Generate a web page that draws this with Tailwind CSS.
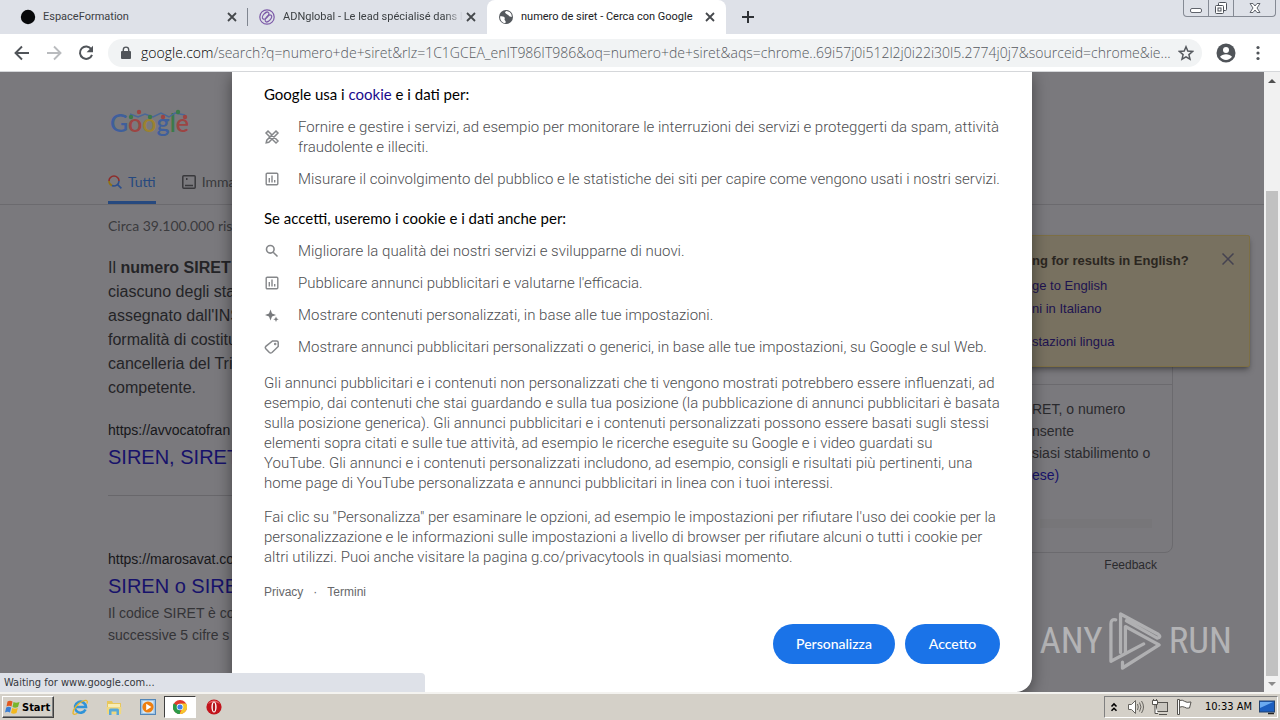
<!DOCTYPE html>
<html lang="it">
<head>
<meta charset="utf-8">
<title>numero de siret - Cerca con Google</title>
<script src="https://cdn.jsdelivr.net/npm/@tailwindcss/browser@4"></script>
</head>
<body class="h-screen flex flex-col overflow-hidden bg-[#7a797d] font-['Liberation_Sans',Arial,sans-serif] text-sm">

<!-- Tab strip -->
<header class="h-[34px] shrink-0 flex bg-[#dee1e8] font-['Roboto',sans-serif] text-[11px] text-[#3c4043]">
  <div class="w-[247px] flex items-center pl-5 pr-[3px]">
    <svg class="size-4 shrink-0" viewBox="0 0 16 16"><circle cx="8" cy="8" r="7.2" fill="#08090b"/></svg>
    <span class="ml-[7px] flex-1 whitespace-nowrap">EspaceFormation</span>
    <button aria-label="Chiudi scheda" class="size-6 grid place-items-center"><svg class="size-2.5" viewBox="0 0 10 10" stroke="#45484c" stroke-width="1.8"><path d="M1 1l8 8M9 1l-8 8"/></svg></button>
  </div>
  <div class="w-[240px] flex items-center border-l border-[#808690] h-[18px] mt-2 pl-[11px] pr-2">
    <svg class="size-4 shrink-0" viewBox="0 0 16 16" fill="none" stroke="#7c5aa8" stroke-width="1.2"><circle cx="8" cy="8" r="7.2"/><ellipse cx="6.6" cy="6.6" rx="2.2" ry="4.2" transform="rotate(40 6.6 6.6)"/><ellipse cx="9.4" cy="9.4" rx="2.2" ry="4.2" transform="rotate(40 9.4 9.4)"/></svg>
    <span class="ml-2 flex-1 w-0 overflow-hidden whitespace-nowrap mask-r-from-90%">ADNglobal - Le lead spécialisé dans la</span>
    <button aria-label="Chiudi scheda" class="w-4 h-6 grid place-items-center"><svg class="size-2.5" viewBox="0 0 10 10" stroke="#45484c" stroke-width="1.8"><path d="M1 1l8 8M9 1l-8 8"/></svg></button>
  </div>
  <div class="w-[239px] flex items-center pl-[11px] pr-1 bg-white rounded-t-lg">
    <svg class="size-4 shrink-0" viewBox="0 0 16 16"><circle cx="8" cy="8" r="7" fill="#55595e"/><path d="M2.2 7.2c2 .2 3.600 0 4.400 1.400.6 1.200-.6 1.600.2 2.600.8.900 1.200 1.200.6 2.900-3.200-.2-5.700-3.200-5.200-6.900zM8.200 2c-1 .8-1.600 1.600-.6 2.200 1 .5 1 1.300 2.200 1.500 1 .2.600 1.500 2 1.700.9.100 1.400.3 2 .6C14 4.800 11.600 2.200 8.200 2z" fill="#fff"/></svg>
    <span class="ml-[7px] flex-1 whitespace-nowrap text-[#202124]">numero de siret - Cerca con Google</span>
    <button aria-label="Chiudi scheda" class="size-6 grid place-items-center"><svg class="size-2.5" viewBox="0 0 10 10" stroke="#45484c" stroke-width="1.8"><path d="M1 1l8 8M9 1l-8 8"/></svg></button>
  </div>
  <button aria-label="Nuova scheda" class="ml-[10px] w-6 grid place-items-center"><svg class="size-3" viewBox="0 0 12 12" stroke="#2f3236" stroke-width="2"><path d="M6 0v12M0 6h12"/></svg></button>
  <div class="ml-auto mr-1 h-[17px] flex border border-t-0 border-[#858a94] rounded-b-[4px] overflow-hidden">
    <button aria-label="Riduci a icona" class="w-6 grid place-items-center"><svg class="w-3 h-4" viewBox="0 0 12 16" fill="#fff" stroke="#60646c"><rect x=".5" y="8.500" width="11" height="4" rx="1.500"/></svg></button>
    <button aria-label="Ripristina" class="w-[26px] border-x border-[#858a94] grid place-items-center"><svg class="w-3.5 h-4" viewBox="0 0 14 16" fill="#fff" stroke="#4d5159"><rect x="4.500" y="2.500" width="8" height="8" rx="1"/><rect x="1.500" y="5.500" width="8" height="8" rx="1"/><rect x="4" y="8" width="3" height="3"/></svg></button>
    <button aria-label="Chiudi" class="w-[41px] grid place-items-center"><svg class="w-3 h-4" viewBox="0 0 12 16" fill="#fff" stroke="#60646c"><path d="M1 3.500h3l2 2.500 2-2.500h3L8 8l3 4.500H8L6 10l-2 2.500H1L4 8z"/></svg></button>
  </div>
</header>

<!-- Toolbar -->
<nav class="h-[38px] shrink-0 flex items-center bg-white border-b border-[#d5d7da]">
  <div class="flex items-center pl-[14px] gap-4">
    <button aria-label="Indietro"><svg class="size-4" viewBox="0 0 16 16" fill="none" stroke="#505459" stroke-width="1.900"><path d="M15 8H2M8 1.500L1.500 8 8 14.500"/></svg></button>
    <button aria-label="Avanti"><svg class="size-4" viewBox="0 0 16 16" fill="none" stroke="#b9bbbe" stroke-width="1.900"><path d="M1 8h13M8 1.500L14.500 8 8 14.500"/></svg></button>
    <button aria-label="Ricarica"><svg class="size-4" viewBox="0 0 16 16"><path d="M13.300 4.200A6.200 6.200 0 1 0 14 9.800" fill="none" stroke="#505459" stroke-width="2"/><path d="M15 .8v6.400H8.600z" fill="#505459"/></svg></button>
  </div>
  <div class="ml-[14px] flex-1 h-7 flex items-center rounded-full bg-[#f1f3f4] pl-[13px] pr-2">
    <svg class="w-2.5 h-3.5 shrink-0" viewBox="0 0 10 14"><rect x="0" y="5" width="10" height="8" rx="1" fill="#505459"/><path d="M2.300 5.500V3.800a2.700 2.700 0 0 1 5.400 0v1.700" fill="none" stroke="#505459" stroke-width="1.400"/></svg>
    <div class="ml-[10px] flex-1 flex items-center font-['Open_Sans',sans-serif] font-light text-sm leading-5">
      <label for="url" class="text-black">google.com</label>
      <input id="url" type="text" class="flex-1 min-w-0 bg-transparent text-[#55595e]" value="/search?q=numero+de+siret&amp;rlz=1C1GCEA_enIT986IT986&amp;oq=numero+de+siret&amp;aqs=chrome..69i57j0i512l2j0i22i30l5.2774j0j7&amp;sourceid=chrome&amp;ie...">
    </div>
    <button aria-label="Aggiungi ai preferiti"><svg class="size-4" viewBox="0 0 16 16" fill="none" stroke="#55595e" stroke-width="1.500"><path d="M8 1.800l1.800 4.300 4.700.4-3.600 3.100 1.100 4.600L8 11.800l-4 2.400 1.100-4.600L1.500 6.500l4.700-.4z"/></svg></button>
  </div>
  <button aria-label="Profilo" class="ml-[14px]"><svg class="size-5" viewBox="0 0 20 20"><circle cx="10" cy="10" r="9.500" fill="#505459"/><circle cx="10" cy="7" r="3" fill="#fff"/><path d="M4 13.800c1.200-1.800 3.500-2.600 6-2.600s4.800.8 6 2.600a7.300 7.300 0 0 1-12 0z" fill="#fff"/></svg></button>
  <button aria-label="Menu" class="ml-[14px] mr-[14px]"><svg class="w-4 h-4" viewBox="0 0 16 16" fill="#505459"><circle cx="8" cy="2.500" r="1.600"/><circle cx="8" cy="8" r="1.600"/><circle cx="8" cy="13.500" r="1.600"/></svg></button>
</nav>

<div class="flex-1 min-h-0 flex relative">
  <!-- Dimmed results page -->
  <div class="flex-1 relative overflow-hidden whitespace-nowrap">
    <div class="h-[133px] border-b border-[#6b6a6e] pl-[108px] flex flex-col justify-between">
      <div class="mt-8 ml-[2px] relative w-20 h-9 font-['Lato',sans-serif] font-semibold text-[25px] leading-9">
        <span class="text-[#3f5f9c]">G</span><span class="text-[#9c4543]">o</span><span class="text-[#9c8230]">o</span><span class="text-[#3f5f9c]">g</span><span class="text-[#3c7a4a]">l</span><span class="text-[#9c4543]">e</span>
        <svg class="absolute left-0 top-1 w-20 h-3" viewBox="0 0 80 12" fill="none" stroke-width="1.500"><path d="M20 6l8 3 7-3 8 3 8-4 8 4 6-4 10 2" stroke="#4a6797"/><g stroke="none"><circle cx="29" cy="4" r="2.200" fill="#9c4543"/><circle cx="40" cy="9" r="2.200" fill="#3c7a4a"/><circle cx="53" cy="9" r="2.200" fill="#9c4543"/><circle cx="68" cy="4" r="2.200" fill="#3c7a4a"/><circle cx="75" cy="9" r="2.200" fill="#9c4543"/><circle cx="21" cy="9" r="2.200" fill="#3c7a4a"/></g></svg>
      </div>
      <div class="flex gap-[26px] font-['Lato',sans-serif] text-sm leading-5">
        <a href="#" class="flex items-center gap-[6px] pb-[9px] border-b-[3px] border-[#26497f] text-[#26497f]"><svg class="size-[14px]" viewBox="0 0 14 14" fill="none" stroke-width="1.600"><path d="M1 6a5 5 0 0 1 5-5" stroke="#8e2d2b"/><path d="M6 1a5 5 0 0 1 5 5" stroke="#8e2d2b"/><path d="M1 6a5 5 0 0 0 3 4.600" stroke="#917312"/><path d="M4 10.600A5 5 0 0 0 11 6M9.600 9.600L13.400 13.400" stroke="#2d4f8c"/></svg>Tutti</a>
        <a href="#" class="flex items-center gap-[6px] pb-[9px] border-b-[3px] border-transparent text-[#39393c]"><svg class="size-[14px]" viewBox="0 0 14 14" fill="none" stroke="#39393c" stroke-width="1.500"><rect x=".8" y=".8" width="12.400" height="12.400" rx="1"/><path d="M3 10.500h8"/><path d="M4 4h1.500" stroke-width="2"/></svg>Imma</a>
      </div>
    </div>
    <main class="pl-[108px] w-[240px] text-[#242427]">
      <p class="mt-[11px] font-['Lato',sans-serif] text-sm leading-5 text-[#3b3b3e]">Circa 39.100.000 ris</p>
      <p class="mt-5 text-base leading-6">Il <b>numero SIRET</b><br>ciascuno degli sta<br>assegnato dall'INS<br>formalità di costitu<br>cancelleria del Trib<br>competente.</p>
      <p class="mt-5 text-sm leading-5 text-[#17171a]">https://avvocatofran</p>
      <h3 class="mt-[5px] text-xl leading-6"><a href="#" class="text-[#17126b]">SIREN, SIRET</a></h3>
      <hr class="mt-[26px] border-[#68676b]">
      <p class="mt-[53px] text-sm leading-5 text-[#17171a]">https://marosavat.co</p>
      <h3 class="mt-[5px] text-xl leading-6"><a href="#" class="text-[#17126b]">SIREN o SIRE</a></h3>
      <p class="mt-1 text-sm leading-[22px] text-[#343437]">Il codice SIRET è co<br>successive 5 cifre s</p>
    </main>
    <aside class="absolute top-[289px] right-[91px] w-[150px] text-[#2a2a2d]">
      <div class="h-[192px] border border-[#6b6a6e] rounded-b-lg">
        <div class="h-[23px] border-b border-[#6b6a6e]"></div>
        <p class="pt-[13px] pl-2 text-sm leading-[22px]">RET, o numero<br>nsente<br>siasi stabilimento o<br><a href="#" class="text-[#17126b]">ese)</a></p>
        <div class="mt-[33px] ml-4 mr-5 h-[9px] bg-[#777679]"></div>
      </div>
      <p class="pr-4 pt-[2px] text-right text-xs leading-5">Feedback</p>
    </aside>
    <!-- Language notice -->
    <section class="absolute top-[163px] right-[14px] w-[240px] h-[132px] bg-[#787160] border border-[#7d6f45] rounded-[2px] shadow-md shadow-black/30 pl-[21px] pt-[15px] text-[13px] text-[#1d1350]">
      <h2 class="leading-5 font-bold text-[#2b2620]">ng for results in English?</h2>
      <a href="#" class="mt-[5px] block leading-5">ge to English</a>
      <a href="#" class="mt-[3px] block leading-5">ni in Italiano</a>
      <a href="#" class="mt-[13px] block leading-5">stazioni lingua</a>
      <button aria-label="Chiudi" class="absolute top-[17px] right-[15px]"><svg class="size-3" viewBox="0 0 12 12" stroke="#454250" stroke-width="1.500"><path d="M.5.5l11 11M11.500.5l-11 11"/></svg></button>
    </section>

    <!-- Watermark -->
    <div class="absolute right-8 bottom-5 flex items-center gap-[6px] text-[#b3b3b5] font-['Liberation_Sans_Narrow','Roboto_Condensed','Roboto',sans-serif] text-[37px] leading-[62px]">
      <span>ANY</span>
      <svg class="w-[54px] h-[62px]" viewBox="0 0 56 62" fill="none" stroke="#b0b0b2" stroke-width="3.400" stroke-linejoin="round" stroke-linecap="round"><path d="M7 9Q2 8 2 13V52L36 34"/><path d="M17 43V16L52 35 14 59V53"/><path d="M12 43V3L51 24Q55 27 50 28L18 10"/></svg>
      <span>RUN</span>
    </div>

    <!-- Consent dialog -->
    <div role="dialog" aria-label="Consenso cookie" class="absolute inset-x-0 top-0 mx-auto w-[800px] max-w-full bg-white rounded-b-2xl shadow-[0_4px_16px_rgba(0,0,0,0.45)] px-8 pt-3 pb-7 font-['Roboto',sans-serif] font-light text-[15px] text-[#4d4e51] leading-5">
      <h2 class="font-['Lato',sans-serif] font-normal text-black">Google usa i <a href="#" class="text-[#1a0a8c]">cookie</a> e i dati per:</h2>
      <ul class="mt-[13px] flex flex-col gap-3">
        <li class="flex items-center gap-[18px]"><svg class="size-4 shrink-0" viewBox="0 0 16 16" fill="none" stroke="#85878a" stroke-width="1.500"><path d="M2 4L4 2l10 10-2 2zM12 2l2 2L4.800 13.200 2.200 13.800l.6-2.600z"/></svg><span>Fornire e gestire i servizi, ad esempio per monitorare le interruzioni dei servizi e proteggerti da spam, attività<br>fraudolente e illeciti.</span></li>
        <li class="flex items-center gap-[18px]"><svg class="size-4 shrink-0" viewBox="0 0 16 16" fill="none" stroke="#85878a" stroke-width="1.400"><rect x="2.200" y="2.200" width="11.600" height="11.600" rx="1"/><path d="M5.300 7v4.500M8 4.500v7M10.700 9v2.500"/></svg><span>Misurare il coinvolgimento del pubblico e le statistiche dei siti per capire come vengono usati i nostri servizi.</span></li>
      </ul>
      <h2 class="mt-[19px] font-['Lato',sans-serif] font-normal text-black">Se accetti, useremo i cookie e i dati anche per:</h2>
      <ul class="mt-[13px] flex flex-col gap-3">
        <li class="flex items-center gap-[18px]"><svg class="size-4 shrink-0" viewBox="0 0 16 16" fill="none" stroke="#85878a" stroke-width="1.600"><circle cx="6.300" cy="6.300" r="3.800"/><path d="M9.200 9.200L13.500 13.500"/></svg><span>Migliorare la qualità dei nostri servizi e svilupparne di nuovi.</span></li>
        <li class="flex items-center gap-[18px]"><svg class="size-4 shrink-0" viewBox="0 0 16 16" fill="none" stroke="#85878a" stroke-width="1.400"><rect x="2.200" y="2.200" width="11.600" height="11.600" rx="1"/><path d="M5.300 7v4.500M8 4.500v7M10.700 9v2.500"/></svg><span>Pubblicare annunci pubblicitari e valutarne l'efficacia.</span></li>
        <li class="flex items-center gap-[18px]"><svg class="size-4 shrink-0" viewBox="0 0 16 16" fill="#77797c"><path d="M6.500 2.500L8 6.500l4 1.500-4 1.500-1.500 4L5 9.500 1 8l4-1.500zM12 9.500l.8 1.900 1.900.8-1.900.8-.8 1.900-.8-1.900-1.900-.8 1.900-.8z"/></svg><span>Mostrare contenuti personalizzati, in base alle tue impostazioni.</span></li>
        <li class="flex items-center gap-[18px]"><svg class="size-4 shrink-0" viewBox="0 0 16 16" fill="none" stroke="#85878a" stroke-width="1.500"><path d="M8.500 2h4.200q1.500 0 1.500 1.500V7.500L8 13.500q-1.500 1-2.600 0L1.800 9.800q-1-1.200 0-2.400z"/><circle cx="11.200" cy="5" r=".5"/></svg><span>Mostrare annunci pubblicitari personalizzati o generici, in base alle tue impostazioni, su Google e sul Web.</span></li>
      </ul>
      <p class="mt-4">Gli annunci pubblicitari e i contenuti non personalizzati che ti vengono mostrati potrebbero essere influenzati, ad<br>esempio, dai contenuti che stai guardando e sulla tua posizione (la pubblicazione di annunci pubblicitari è basata<br>sulla posizione generica). Gli annunci pubblicitari e i contenuti personalizzati possono essere basati sugli stessi<br>elementi sopra citati e sulle tue attività, ad esempio le ricerche eseguite su Google e i video guardati su<br>YouTube. Gli annunci e i contenuti personalizzati includono, ad esempio, consigli e risultati più pertinenti, una<br>home page di YouTube personalizzata e annunci pubblicitari in linea con i tuoi interessi.</p>
      <p class="mt-[14px]">Fai clic su "Personalizza" per esaminare le opzioni, ad esempio le impostazioni per rifiutare l'uso dei cookie per la<br>personalizzazione e le informazioni sulle impostazioni a livello di browser per rifiutare alcuni o tutti i cookie per<br>altri utilizzi. Puoi anche visitare la pagina g.co/privacytools in qualsiasi momento.</p>
      <div class="mt-[15px] flex gap-[10px] font-['Liberation_Sans',sans-serif] text-xs font-normal leading-5 text-[#66676a]"><a href="#">Privacy</a><span>·</span><a href="#">Termini</a></div>
      <div class="mt-[22px] flex justify-end gap-[10px] font-['Lato',sans-serif] text-sm font-medium text-white">
        <button class="h-10 w-[122px] rounded-full bg-[#1a73e8]">Personalizza</button>
        <button class="h-10 w-[95px] rounded-full bg-[#1a73e8]">Accetto</button>
      </div>
    </div>
  </div>

  <!-- Scrollbar -->
  <div class="w-4 shrink-0 bg-[#f1f1f1] flex flex-col items-center">
    <svg class="size-4 shrink-0" viewBox="0 0 16 16"><path d="M4 11h8L8 7z" fill="#505050"/></svg>
    <div class="mt-[103px] flex-1 w-3 bg-[#c1c1c1]"></div>
    <svg class="size-4 shrink-0" viewBox="0 0 16 16"><path d="M4 6h8l-4 4z" fill="#8b8b8b"/></svg>
  </div>

  <div class="absolute left-0 bottom-0 w-[425px] h-[19px] bg-[#dee1e8] rounded-tr pl-1 font-['DejaVu_Sans_Condensed','DejaVu_Sans',sans-serif] text-[11px] leading-[19px] text-[#34373c]">Waiting for www.google.com...</div>
</div>

<!-- Taskbar -->
<footer class="h-7 shrink-0 flex items-center bg-[#d4d0c8] border-t-2 border-[#f4f3f0]">
  <button class="ml-[2px] h-[22px] w-[52px] flex items-center gap-[1px] pl-[2px] border border-t-white border-l-white border-r-[#404040] border-b-[#404040] shadow-[inset_-1px_-1px_0_#808080] font-['DejaVu_Sans_Condensed','DejaVu_Sans',sans-serif] font-bold text-[11px] leading-none text-black">
    <svg class="size-4 shrink-0" viewBox="0 0 16 16"><path d="M2.500 2.500q2.500-1.500 5 0L6.500 7.500q-2.500-1.500-5 0z" fill="#e2591f"/><path d="M8.500 3q2.500 1.500 6 0L13 8q-3 1.300-5.500 0z" fill="#78b52c"/><path d="M1.200 8.500q2.500-1.500 5 0L5 13.500q-2.500-1.500-5 0z" fill="#3b7fd4"/><path d="M7.200 9q2.600 1.500 5.600 0L11.500 14q-3 1.300-5.500 0z" fill="#f3b81d"/></svg>Start</button>
  <div class="ml-[9px] flex items-center">
    <button aria-label="Internet Explorer" class="w-[34px] grid place-items-center"><svg class="size-[18px]" viewBox="0 0 18 18" fill="none"><path d="M14.500 11.500A5.500 5.500 0 1 1 15 9H5" stroke="#2f93d8" stroke-width="2.600"/><path d="M16 5.500c1-3-.5-4-4-2.500C7 5 2 11 2 15c0 2 2.500 1.500 4.500.3" stroke="#e8b62b" stroke-width="1.300"/></svg></button>
    <button aria-label="Esplora file" class="w-[34px] grid place-items-center"><svg class="size-[18px]" viewBox="0 0 18 18"><path d="M2 3h5l1 2h8v10H2z" fill="#e8c75c"/><path d="M3 6h12v4H3z" fill="#f8edb5"/><path d="M1.500 9h15l-.5 7H2z" fill="#f0d880"/><path d="M4 17v-5q0-1.500 1.500-1.500h7Q14 10.500 14 12v5h-2.500v-3.500h-5V17z" fill="#58a8d8"/></svg></button>
    <button aria-label="Windows Media Player" class="w-[33px] grid place-items-center"><svg class="size-4" viewBox="0 0 16 16"><rect x=".5" y=".5" width="15" height="15" fill="#9fc4e4" stroke="#5286b8"/><rect x="2.500" y="2" width="11" height="12" fill="#d6e8f5"/><circle cx="8" cy="8" r="5.600" fill="#ee7f10"/><path d="M6.200 4.800v6.400L11.400 8z" fill="#fff"/></svg></button>
    <button aria-label="Google Chrome" class="w-[32px] h-[22px] bg-white border border-t-[#404040] border-l-[#404040] border-r-white border-b-white grid place-items-center"><svg class="size-[14px]" viewBox="0 0 14 14"><circle cx="7" cy="7" r="7" fill="#e1392c"/><path d="M7 7L.9 3.600A7 7 0 0 0 7 14z" fill="#2c9a48"/><path d="M7 7l.5-3.500h5.600A7 7 0 0 1 6.500 14L9.500 8z" fill="#f6c62b"/><path d="M.9 3.600L4.200 8.800 7 10l-.5 4A7 7 0 0 1 .9 3.600z" fill="#2c9a48"/><circle cx="7" cy="7" r="3.300" fill="#fff"/><circle cx="7" cy="7" r="2.600" fill="#3d80ea"/></svg></button>
    <button aria-label="Opera" class="w-[35px] grid place-items-center"><svg class="size-4" viewBox="0 0 16 16"><circle cx="8" cy="8" r="7.600" fill="#c2141c"/><path d="M2 5a7 7 0 0 1 12 0Q8 1 2 5z" fill="#e8686b"/><ellipse cx="8" cy="8" rx="2.600" ry="5.600" fill="#fff"/><ellipse cx="8" cy="8" rx="1.200" ry="4.600" fill="#b0151c"/></svg></button>
  </div>
  <div class="ml-auto mr-[2px] h-[22px] flex items-center border border-t-[#808080] border-l-[#808080] border-r-white border-b-white pl-[5px] pr-[2px]">
    <button aria-label="Mostra icone nascoste"><svg class="w-2 h-3" viewBox="0 0 8 12" fill="none" stroke="#000" stroke-width="1.600"><path d="M1.500 5.500L4 3l2.500 2.500M1.500 9.800L4 7.300l2.500 2.500"/></svg></button>
    <svg class="ml-[9px] size-[18px]" viewBox="0 0 18 18" fill="#fff" stroke="#66645f"><path d="M1.500 6.500h3l4-4v13l-4-4h-3z"/><path d="M10.500 6q1.500 3 0 6M12.500 4.500q3 4.500 0 9M14.500 3q4 6 0 12" fill="none"/></svg>
    <svg class="ml-[6px] size-[18px]" viewBox="0 0 18 18" fill="#fff" stroke="#55534f"><rect x="5.500" y="4.500" width="11" height="9" fill="#c9c6bf"/><path d="M8 16.500h8M1.500 2.500h5v4h-5zM2.500 1v1.500M5.500 1v1.500M4 6.500v9h3"/></svg>
    <svg class="ml-[6px] size-[18px]" viewBox="0 0 18 18" fill="#fff" stroke="#55534f"><path d="M2.500 1.500v15h2v-15zM4.500 2.500q3-1 5 .8 2 1.700 6.500.7l-1.500 6q-3 .7-5-.8-2-1.200-5 0z"/></svg>
    <time class="ml-3 font-['DejaVu_Sans_Condensed','DejaVu_Sans',sans-serif] text-[11px] text-black">10:33 AM</time>
    <svg class="ml-[7px] size-4" viewBox="0 0 16 16"><rect x=".5" y="2" width="15" height="11" fill="#1c5fc0" stroke="#23436f"/><path d="M1 3h13L1 9z" fill="#6aaaf0"/><path d="M9 14.500h6" stroke="#222" stroke-width="1.500"/></svg>
  </div>
</footer>
</body>
</html>
